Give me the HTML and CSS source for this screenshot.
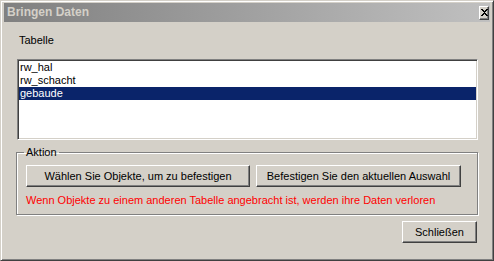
FILE: index.html
```html
<!DOCTYPE html>
<html lang="de">
<head>
    <meta charset="UTF-8">
    <title>Bringen Daten</title>
    <link rel="stylesheet" href="styles.css">
</head>
<body>
    <div class="window">
        <div class="titlebar">
            <span class="title">Bringen Daten</span>
            <span class="close-btn">
                <svg width="7" height="7" viewBox="0 0 7 7">
                    <path d="M0 0h2v1h1v1h1v-1h1v-1h2v1h-1v1h-1v1h-1v1h1v1h1v1h1v1h-2v-1h-1v-1h-1v1h-1v1h-2v-1h1v-1h1v-1h1v-1h-1v-1h-1v-1h-1z" fill="#000"/>
                </svg>
            </span>
        </div>
        <div class="content">
            <div class="caption">Tabelle</div>
            <div class="listbox">
                <div class="item">rw_hal</div>
                <div class="item">rw_schacht</div>
                <div class="item selected">gebaude</div>
            </div>
            <fieldset class="group">
                <legend>Aktion</legend>
                <div class="actions">
                    <button class="btn btn-select">Wählen Sie Objekte, um zu befestigen</button>
                    <button class="btn btn-attach">Befestigen Sie den aktuellen Auswahl</button>
                </div>
                <div class="warning">Wenn Objekte zu einem anderen Tabelle angebracht ist, werden ihre Daten verloren</div>
            </fieldset>
            <div class="footer">
                <button class="btn btn-close">Schließen</button>
            </div>
        </div>
    </div>
</body>
</html>
```

FILE: styles.css
```css
body {
    margin: 0;
    padding: 0;
    background-color: #d4d0c8;
    font-family: "Liberation Sans", Arial, sans-serif;
    font-size: 11px;
    color: #000;
}
.window {
    width: 494px;
    height: 261px;
    box-sizing: border-box;
    border: 1px solid;
    border-color: #d4d0c8 #404040 #404040 #d4d0c8;
    box-shadow: inset 1px 1px 0 #fff, inset -1px -1px 0 #808080;
    padding: 2px 3px 3px 3px;
    background-color: #d4d0c8;
}
.titlebar {
    height: 19px;
    background: linear-gradient(to right, #808080, #c0c0c0);
    display: flex;
    align-items: center;
    justify-content: space-between;
    padding: 0 1px 0 3px;
}
.title {
    font-weight: bold;
    color: #d4d0c8;
    font-size: 12px;
    line-height: 13px;
}
.close-btn {
    width: 10px;
    height: 14px;
    box-sizing: border-box;
    background-color: #d4d0c8;
    border: 1px solid;
    border-color: #fff #404040 #404040 #fff;
    box-shadow: inset -1px -1px 0 #808080;
    display: flex;
    align-items: center;
    justify-content: center;
}
.content {
    padding: 12px 12px 0 12px;
}
.caption {
    line-height: 13px;
    margin-left: 3px;
}
.listbox {
    margin: 12px 0 0 1px;
    height: 81px;
    box-sizing: border-box;
    background-color: #fff;
    border: 1px solid;
    border-color: #808080 #fff #fff #808080;
    box-shadow: inset 1px 1px 0 #404040, inset -1px -1px 0 #d4d0c8;
    padding: 1px 1px;
}
.item {
    height: 13px;
    line-height: 13px;
    padding-left: 1px;
}
.item.selected {
    background-color: #0a246a;
    color: #fff;
}
.group {
    margin: 6px 0 0 0;
    padding: 6px 9px 7px 9px;
    border: 1px solid #808080;
    box-shadow: inset 1px 1px 0 #fff, 1px 1px 0 #fff;
    min-width: 0;
}
.group legend {
    padding: 0 2px;
    margin-left: -2px;
    line-height: 13px;
}
.actions {
    display: flex;
    gap: 6px;
}
.btn {
    height: 22px;
    box-sizing: border-box;
    font-family: "Liberation Sans", Arial, sans-serif;
    font-size: 11px;
    color: #000;
    background-color: #d4d0c8;
    border: 1px solid;
    border-color: #fff #404040 #404040 #fff;
    box-shadow: inset -1px -1px 0 #808080;
    padding: 0;
    margin: 0;
}
.btn-select {
    width: 224px;
}
.btn-attach {
    width: 205px;
}
.warning {
    color: #ff0000;
    line-height: 13px;
    margin-top: 7px;
}
.footer {
    display: flex;
    justify-content: flex-end;
    margin-top: 6px;
    padding-right: 1px;
}
.btn-close {
    width: 75px;
}
```
